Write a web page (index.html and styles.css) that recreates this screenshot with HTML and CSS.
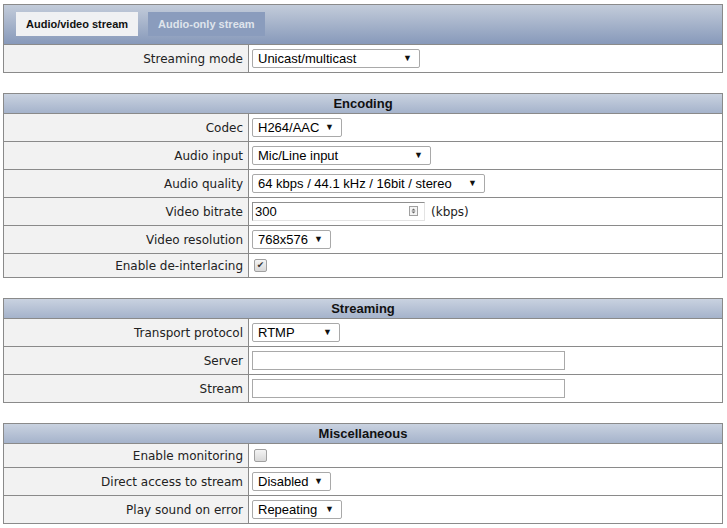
FILE: index.html
```html
<!DOCTYPE html>
<html>
<head>
<meta charset="utf-8">
<link rel="stylesheet" href="styles.css">
</head>
<body>
<div class="page">
  <section class="panel">
    <div class="tabbar">
      <span class="tab active">Audio/video stream</span>
      <span class="tab">Audio-only stream</span>
    </div>
    <div class="row">
      <div class="label">Streaming mode</div>
      <div class="value"><span class="select w-mode">Unicast/multicast<i class="arrow">▼</i></span></div>
    </div>
  </section>

  <section class="panel">
    <div class="head">Encoding</div>
    <div class="row">
      <div class="label">Codec</div>
      <div class="value"><span class="select w-codec">H264/AAC<i class="arrow">▼</i></span></div>
    </div>
    <div class="row">
      <div class="label">Audio input</div>
      <div class="value"><span class="select w-input">Mic/Line input<i class="arrow">▼</i></span></div>
    </div>
    <div class="row">
      <div class="label">Audio quality</div>
      <div class="value"><span class="select w-quality">64 kbps / 44.1 kHz / 16bit / stereo<i class="arrow">▼</i></span></div>
    </div>
    <div class="row">
      <div class="label">Video bitrate</div>
      <div class="value">
        <span class="number">300<span class="spin"><svg width="9" height="10" viewBox="0 0 9 10"><rect x="0.5" y="0.5" width="8" height="9" fill="#f4f4f4" stroke="#a0a0a0"/><path d="M4.5 2.5 L6.5 4.5 L2.5 4.5 Z" fill="#666"/><path d="M4.5 7.5 L6.5 5.5 L2.5 5.5 Z" fill="#666"/></svg></span></span>
        <span class="unit">(kbps)</span>
      </div>
    </div>
    <div class="row">
      <div class="label">Video resolution</div>
      <div class="value"><span class="select w-res">768x576<i class="arrow">▼</i></span></div>
    </div>
    <div class="row short">
      <div class="label">Enable de-interlacing</div>
      <div class="value"><span class="check checked">✔</span></div>
    </div>
  </section>

  <section class="panel">
    <div class="head">Streaming</div>
    <div class="row">
      <div class="label">Transport protocol</div>
      <div class="value"><span class="select w-proto">RTMP<i class="arrow">▼</i></span></div>
    </div>
    <div class="row">
      <div class="label">Server</div>
      <div class="value"><span class="text"></span></div>
    </div>
    <div class="row">
      <div class="label">Stream</div>
      <div class="value"><span class="text"></span></div>
    </div>
  </section>

  <section class="panel">
    <div class="head">Miscellaneous</div>
    <div class="row short">
      <div class="label">Enable monitoring</div>
      <div class="value"><span class="check"></span></div>
    </div>
    <div class="row">
      <div class="label">Direct access to stream</div>
      <div class="value"><span class="select w-direct">Disabled<i class="arrow">▼</i></span></div>
    </div>
    <div class="row">
      <div class="label">Play sound on error</div>
      <div class="value"><span class="select w-sound">Repeating<i class="arrow">▼</i></span></div>
    </div>
  </section>
</div>
</body>
</html>
```

FILE: styles.css
```css
html, body {
  margin: 0;
  padding: 0;
  background: #ffffff;
}
.page {
  padding: 4px 4px 0 3px;
  display: flex;
  flex-direction: column;
  gap: 20px;
  font-family: "DejaVu Sans", Verdana, sans-serif;
  font-size: 12px;
  color: #222;
}
.panel {
  border: 1px solid #8a8a8a;
  display: flex;
  flex-direction: column;
}
.tabbar {
  border-bottom: 1px solid #8a8a8a;
  background: linear-gradient(#c3ccda, #8799ba);
  display: flex;
  align-items: flex-start;
  gap: 10px;
  padding: 7px 0 0 12px;
  box-sizing: border-box;
  height: 40px;
}
.tab {
  height: 24px;
  line-height: 24px;
  padding: 0 10px 0 10px;
  font-family: "Liberation Sans", Arial, sans-serif;
  font-weight: bold;
  font-size: 11px;
  color: #dfe4ec;
  background: #8a9cbd;
}
.tab.active {
  background: #f0f1f3;
  color: #111;
}
.head {
  height: 19px;
  line-height: 19px;
  border-bottom: 1px solid #8a8a8a;
  background: linear-gradient(#c9d2e0, #a5b3cb);
  text-align: center;
  font-family: "Liberation Sans", Arial, sans-serif;
  font-weight: bold;
  font-size: 13px;
  color: #111;
}
.row {
  display: grid;
  grid-template-columns: 245px 1fr;
  height: 28px;
  border-bottom: 1px solid #8a8a8a;
  box-sizing: border-box;
}
.row:last-child {
  border-bottom: none;
  height: 27px;
}
.row.short {
  height: 24px;
}
.row.short:last-child {
  height: 23px;
}
.label {
  background: #f2f2f2;
  border-right: 1px solid #8a8a8a;
  padding-right: 5px;
  display: flex;
  align-items: center;
  justify-content: flex-end;
}
.value {
  display: flex;
  align-items: center;
  padding-left: 3px;
  gap: 5px;
  background: #fff;
}
.select {
  position: relative;
  height: 19px;
  box-sizing: border-box;
  border: 1px solid #a9a9a9;
  border-radius: 2px;
  background: #fff;
  font-family: "Liberation Sans", Arial, sans-serif;
  font-size: 13px;
  color: #000;
  line-height: 17px;
  padding-left: 5px;
  white-space: nowrap;
}
.arrow {
  position: absolute;
  right: 7px;
  top: 0;
  font-style: normal;
  font-size: 9px;
  line-height: 17px;
  color: #111;
}
.w-mode { width: 168px; }
.w-codec { width: 90px; }
.w-input { width: 179px; }
.w-quality { width: 233px; }
.w-res { width: 79px; }
.w-proto { width: 88px; }
.w-direct { width: 79px; }
.w-sound { width: 90px; }
.number {
  position: relative;
  width: 173px;
  height: 19px;
  box-sizing: border-box;
  border-top: 1px solid #8f8f8f;
  border-left: 1px solid #8f8f8f;
  border-right: 1px solid #e3e3e3;
  border-bottom: 1px solid #e3e3e3;
  font-family: "Liberation Sans", Arial, sans-serif;
  font-size: 13px;
  color: #000;
  line-height: 17px;
  padding-left: 2px;
}
.spin {
  position: absolute;
  right: 6px;
  top: 3px;
  line-height: 0;
}
.unit {
  margin-left: 1px;
}
.text {
  width: 313px;
  height: 19px;
  box-sizing: border-box;
  border: 1px solid #a9a9a9;
  background: #fff;
}
.check {
  margin-left: 2px;
  width: 13px;
  height: 13px;
  box-sizing: border-box;
  border: 1px solid #a0a0a0;
  border-radius: 2px;
  background: linear-gradient(#f4f4f4, #d8d8d8);
  font-size: 9px;
  line-height: 11px;
  text-align: center;
  color: #333;
}
```
